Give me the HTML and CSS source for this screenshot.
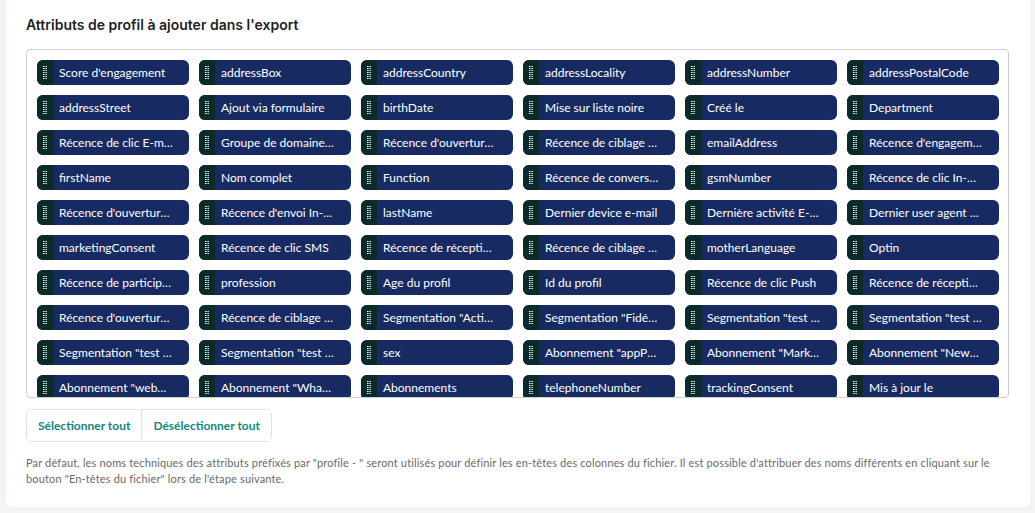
FILE: index.html
```html
<!DOCTYPE html>
<html>
<head>
  <meta charset="utf-8">
  <link rel="stylesheet" href="styles.css">
</head>
<body>
  <div class="card">
    <h2 class="section-title">Attributs de profil à ajouter dans l'export</h2>

    <div class="attr-box">
      <div class="attr-grid">
        <div class="chip"><span class="handle"></span><span class="chip-label">Score d'engagement</span></div>
        <div class="chip"><span class="handle"></span><span class="chip-label">addressBox</span></div>
        <div class="chip"><span class="handle"></span><span class="chip-label">addressCountry</span></div>
        <div class="chip"><span class="handle"></span><span class="chip-label">addressLocality</span></div>
        <div class="chip"><span class="handle"></span><span class="chip-label">addressNumber</span></div>
        <div class="chip"><span class="handle"></span><span class="chip-label">addressPostalCode</span></div>

        <div class="chip"><span class="handle"></span><span class="chip-label">addressStreet</span></div>
        <div class="chip"><span class="handle"></span><span class="chip-label">Ajout via formulaire</span></div>
        <div class="chip"><span class="handle"></span><span class="chip-label">birthDate</span></div>
        <div class="chip"><span class="handle"></span><span class="chip-label">Mise sur liste noire</span></div>
        <div class="chip"><span class="handle"></span><span class="chip-label">Créé le</span></div>
        <div class="chip"><span class="handle"></span><span class="chip-label">Department</span></div>

        <div class="chip"><span class="handle"></span><span class="chip-label">Récence de clic E-mail</span></div>
        <div class="chip"><span class="handle"></span><span class="chip-label">Groupe de domaine e-mail</span></div>
        <div class="chip"><span class="handle"></span><span class="chip-label">Récence d'ouverture E-mail</span></div>
        <div class="chip"><span class="handle"></span><span class="chip-label">Récence de ciblage E-mail</span></div>
        <div class="chip"><span class="handle"></span><span class="chip-label">emailAddress</span></div>
        <div class="chip"><span class="handle"></span><span class="chip-label">Récence d'engagement</span></div>

        <div class="chip"><span class="handle"></span><span class="chip-label">firstName</span></div>
        <div class="chip"><span class="handle"></span><span class="chip-label">Nom complet</span></div>
        <div class="chip"><span class="handle"></span><span class="chip-label">Function</span></div>
        <div class="chip"><span class="handle"></span><span class="chip-label">Récence de conversion</span></div>
        <div class="chip"><span class="handle"></span><span class="chip-label">gsmNumber</span></div>
        <div class="chip"><span class="handle"></span><span class="chip-label">Récence de clic In-App</span></div>

        <div class="chip"><span class="handle"></span><span class="chip-label">Récence d'ouverture In-App</span></div>
        <div class="chip"><span class="handle"></span><span class="chip-label">Récence d'envoi In-App</span></div>
        <div class="chip"><span class="handle"></span><span class="chip-label">lastName</span></div>
        <div class="chip"><span class="handle"></span><span class="chip-label">Dernier device e-mail</span></div>
        <div class="chip"><span class="handle"></span><span class="chip-label">Dernière activité E-mail</span></div>
        <div class="chip"><span class="handle"></span><span class="chip-label">Dernier user agent e-mail</span></div>

        <div class="chip"><span class="handle"></span><span class="chip-label">marketingConsent</span></div>
        <div class="chip"><span class="handle"></span><span class="chip-label">Récence de clic SMS</span></div>
        <div class="chip"><span class="handle"></span><span class="chip-label">Récence de réception SMS</span></div>
        <div class="chip"><span class="handle"></span><span class="chip-label">Récence de ciblage SMS</span></div>
        <div class="chip"><span class="handle"></span><span class="chip-label">motherLanguage</span></div>
        <div class="chip"><span class="handle"></span><span class="chip-label">Optin</span></div>

        <div class="chip"><span class="handle"></span><span class="chip-label">Récence de participation</span></div>
        <div class="chip"><span class="handle"></span><span class="chip-label">profession</span></div>
        <div class="chip"><span class="handle"></span><span class="chip-label">Age du profil</span></div>
        <div class="chip"><span class="handle"></span><span class="chip-label">Id du profil</span></div>
        <div class="chip"><span class="handle"></span><span class="chip-label">Récence de clic Push</span></div>
        <div class="chip"><span class="handle"></span><span class="chip-label">Récence de réception Push</span></div>

        <div class="chip"><span class="handle"></span><span class="chip-label">Récence d'ouverture Push</span></div>
        <div class="chip"><span class="handle"></span><span class="chip-label">Récence de ciblage Push</span></div>
        <div class="chip"><span class="handle"></span><span class="chip-label">Segmentation "Activité"</span></div>
        <div class="chip"><span class="handle"></span><span class="chip-label">Segmentation "Fidélité"</span></div>
        <div class="chip"><span class="handle"></span><span class="chip-label">Segmentation "test 1"</span></div>
        <div class="chip"><span class="handle"></span><span class="chip-label">Segmentation "test 2"</span></div>

        <div class="chip"><span class="handle"></span><span class="chip-label">Segmentation "test 3"</span></div>
        <div class="chip"><span class="handle"></span><span class="chip-label">Segmentation "test 4"</span></div>
        <div class="chip"><span class="handle"></span><span class="chip-label">sex</span></div>
        <div class="chip"><span class="handle"></span><span class="chip-label">Abonnement "appPush"</span></div>
        <div class="chip"><span class="handle"></span><span class="chip-label">Abonnement "Marketing"</span></div>
        <div class="chip"><span class="handle"></span><span class="chip-label">Abonnement "Newsletter"</span></div>

        <div class="chip"><span class="handle"></span><span class="chip-label">Abonnement "webPush"</span></div>
        <div class="chip"><span class="handle"></span><span class="chip-label">Abonnement "WhatsApp"</span></div>
        <div class="chip"><span class="handle"></span><span class="chip-label">Abonnements</span></div>
        <div class="chip"><span class="handle"></span><span class="chip-label">telephoneNumber</span></div>
        <div class="chip"><span class="handle"></span><span class="chip-label">trackingConsent</span></div>
        <div class="chip"><span class="handle"></span><span class="chip-label">Mis à jour le</span></div>
      </div>
    </div>

    <div class="btn-group">
      <button class="group-btn">Sélectionner tout</button>
      <button class="group-btn">Désélectionner tout</button>
    </div>

    <p class="hint">Par défaut, les noms techniques des attributs préfixés par "profile - " seront utilisés pour définir les en-têtes des colonnes du fichier. Il est possible d'attribuer des noms différents en cliquant sur le bouton "En-têtes du fichier" lors de l'étape suivante.</p>
  </div>
</body>
</html>
```

FILE: styles.css
```css
body {
  margin: 0;
  padding: 0;
  background: #f3f4f4;
  font-family: Lato, "Noto Sans", sans-serif;
  color: #222;
}

.card {
  background: #fff;
  margin: 0 5px 0 6px;
  padding: 15px 21px 20px 20px;
  border-radius: 0 0 6px 6px;
}

.section-title {
  margin: 0 0 14px 0;
  font-family: Inter, Lato, sans-serif;
  font-size: 14px;
  line-height: 20px;
  font-weight: 600;
  color: #1f1f1f;
}

.attr-box {
  height: 349px;
  box-sizing: border-box;
  border: 1px solid #cfcfcf;
  border-radius: 4px;
  padding: 10px 9px 0 10px;
  overflow: hidden;
}

.attr-grid {
  display: grid;
  grid-template-columns: repeat(6, 1fr);
  gap: 10px;
}

.chip {
  display: flex;
  align-items: center;
  height: 25px;
  background: #172b62;
  border-radius: 6px;
  overflow: hidden;
  min-width: 0;
}

.handle {
  flex: none;
  width: 16px;
  height: 100%;
  background: #0b2a2a;
  display: flex;
  align-items: center;
  justify-content: center;
}

/* drag grip: two columns of small dots */
.handle::before {
  content: "";
  width: 4px;
  height: 14px;
  background-image: linear-gradient(to bottom, #fff 0 1.3px, transparent 1.3px);
  background-size: 1.5px 2px;
  background-repeat: space;
}

.chip-label {
  flex: 1;
  min-width: 0;
  padding: 0 16px 0 6px;
  color: #fff;
  font-size: 12px;
  white-space: nowrap;
  overflow: hidden;
  text-overflow: ellipsis;
}

.btn-group {
  display: inline-flex;
  margin-top: 11px;
  border: 1px solid #e2e2e2;
  border-radius: 6px;
  overflow: hidden;
}

.group-btn {
  height: 31px;
  padding: 0 11px;
  background: #fff;
  border: none;
  color: #14867f;
  font-family: Lato, "Noto Sans", sans-serif;
  font-size: 12px;
  font-weight: 700;
  cursor: pointer;
}

.group-btn + .group-btn {
  border-left: 1px solid #e2e2e2;
}

.hint {
  margin: 13px 0 0 0;
  font-size: 11px;
  line-height: 16px;
  letter-spacing: 0.15px;
  color: #6a6a6a;
}
```
